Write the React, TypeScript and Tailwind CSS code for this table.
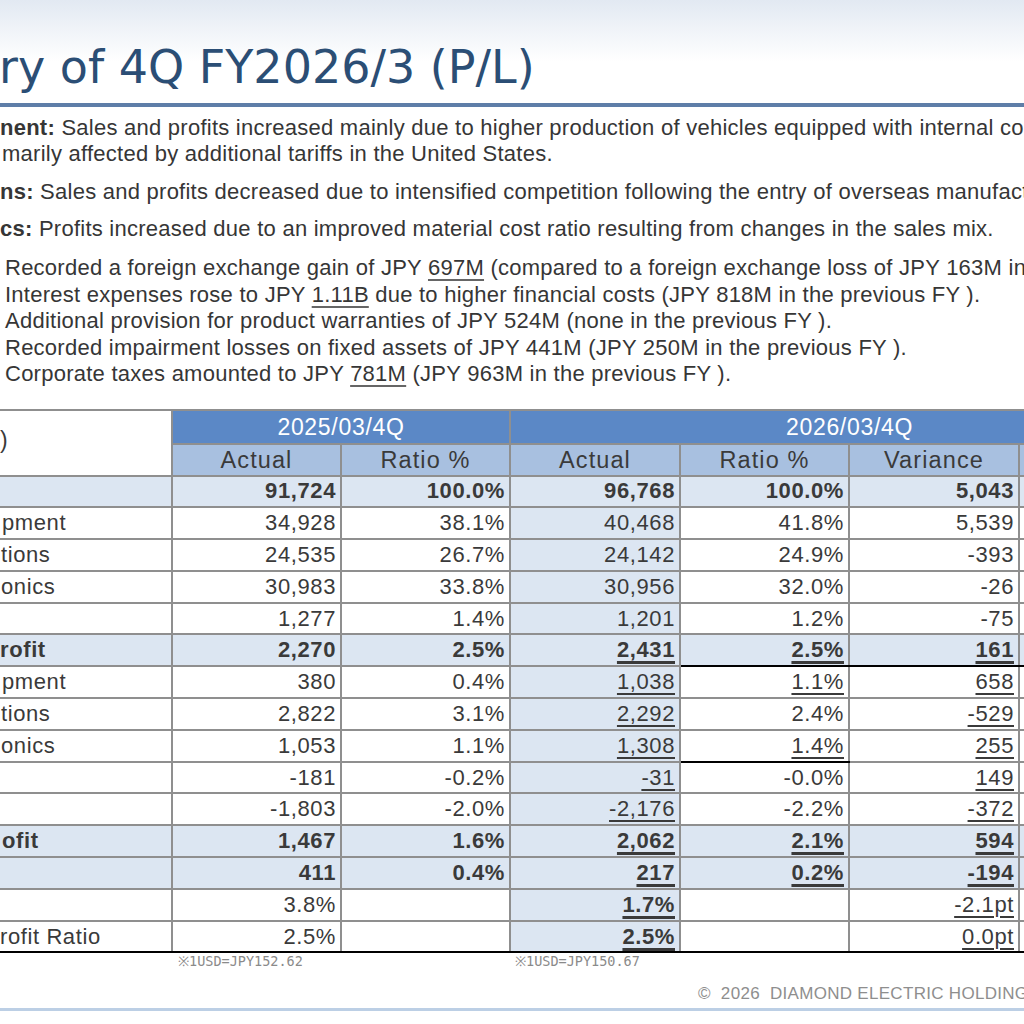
import React from 'react';

type Row = {
  label: string;
  indent: string;
  shade?: boolean;
  bold?: boolean;
  cells: string[];
  blackUnder?: number[];
};

// "_" = underlined, "*" = bold
const rows: Row[] = [
  { label: '', indent: 'pl-0', shade: true, bold: true, cells: ['91,724', '100.0%', '96,768', '100.0%', '5,043'] },
  { label: 'pment', indent: 'pl-[2px]', cells: ['34,928', '38.1%', '40,468', '41.8%', '5,539'] },
  { label: 'tions', indent: 'pl-[1px]', cells: ['24,535', '26.7%', '24,142', '24.9%', '-393'] },
  { label: 'onics', indent: 'pl-[1px]', cells: ['30,983', '33.8%', '30,956', '32.0%', '-26'] },
  { label: '', indent: 'pl-0', cells: ['1,277', '1.4%', '1,201', '1.2%', '-75'] },
  { label: 'rofit', indent: 'pl-0', shade: true, bold: true, cells: ['2,270', '2.5%', '_2,431', '_2.5%', '_161'], blackUnder: [4, 5, 6] },
  { label: 'pment', indent: 'pl-[2px]', cells: ['380', '0.4%', '_1,038', '_1.1%', '_658'] },
  { label: 'tions', indent: 'pl-[1px]', cells: ['2,822', '3.1%', '_2,292', '2.4%', '_-529'] },
  { label: 'onics', indent: 'pl-[1px]', cells: ['1,053', '1.1%', '_1,308', '_1.4%', '_255'], blackUnder: [4] },
  { label: '', indent: 'pl-0', cells: ['-181', '-0.2%', '_-31', '-0.0%', '_149'] },
  { label: '', indent: 'pl-0', cells: ['-1,803', '-2.0%', '_-2,176', '-2.2%', '_-372'] },
  { label: 'ofit', indent: 'pl-[2px]', shade: true, bold: true, cells: ['1,467', '1.6%', '_2,062', '_2.1%', '_594'] },
  { label: '', indent: 'pl-0', shade: true, bold: true, cells: ['411', '0.4%', '_217', '_0.2%', '_-194'] },
  { label: '', indent: 'pl-0', cells: ['3.8%', '', '*_1.7%', '', '_-2.1pt'] },
  { label: 'rofit Ratio', indent: 'pl-0', cells: ['2.5%', '', '*_2.5%', '', '_0.0pt'] },
];

const Value = ({ raw, bold }: { raw: string; bold?: boolean }) => {
  let text = raw;
  let strong = bold;
  let under = false;
  if (text.startsWith('*')) {
    strong = true;
    text = text.slice(1);
  }
  if (text.startsWith('_')) {
    under = true;
    text = text.slice(1);
  }
  return (
    <span
      className={
        (strong ? 'font-bold ' : '') +
        (under
          ? strong
            ? 'underline underline-offset-[4px] decoration-[2.5px]'
            : 'underline underline-offset-[4px] decoration-[1.5px]'
          : '')
      }
    >
      {text}
    </span>
  );
};

const Bullet = ({ children }: { children: React.ReactNode }) => (
  <div className="whitespace-nowrap leading-[26.5px]">{children}</div>
);

const U = ({ children }: { children: React.ReactNode }) => (
  <span className="underline underline-offset-[4px] decoration-[1.5px] decoration-[#666]">{children}</span>
);

export default function App() {
  return (
    <div className="w-[1024px] h-[1024px] overflow-hidden bg-white font-['Liberation_Sans',Arial,sans-serif] text-[#363636]">
      {/* Title */}
      <div className="h-[103px] pt-[39px] bg-linear-to-b from-[#e2e9f2] via-white via-[60%] to-white">
        <div className="font-['DejaVu_Sans',sans-serif] text-[46px] leading-[56px] text-[#2b4e75] whitespace-nowrap -ml-[1px]">
          ry of 4Q FY2026/3 (P/L)
        </div>
      </div>
      <div className="h-[4px] bg-[#5e7ea8]" />

      {/* Segment comments */}
      <div className="mt-[8px] text-[22px] tracking-[0.25px]">
        <div className="whitespace-nowrap leading-[26px]">
          <span className="font-bold">nent:</span> Sales and profits increased mainly due to higher production of vehicles equipped with internal combustion engines,
        </div>
        <div className="whitespace-nowrap leading-[26px] pl-[2px]">
          marily affected by additional tariffs in the United States.
        </div>
        <div className="whitespace-nowrap leading-[26px] mt-[12px]">
          <span className="font-bold">ns:</span> Sales and profits decreased due to intensified competition following the entry of overseas manufacturers.
        </div>
        <div className="whitespace-nowrap leading-[26px] mt-[11px]">
          <span className="font-bold">cs:</span> Profits increased due to an improved material cost ratio resulting from changes in the sales mix.
        </div>

        <div className="mt-[13px] pl-[5px]">
          <Bullet>
            Recorded a foreign exchange gain of JPY <U>697M</U> (compared to a foreign exchange loss of JPY 163M in the previous FY ).
          </Bullet>
          <Bullet>
            Interest expenses rose to JPY <U>1.11B</U> due to higher financial costs (JPY 818M in the previous FY ).
          </Bullet>
          <Bullet>Additional provision for product warranties of JPY 524M (none in the previous FY ).</Bullet>
          <Bullet>Recorded impairment losses on fixed assets of JPY 441M (JPY 250M in the previous FY ).</Bullet>
          <Bullet>
            Corporate taxes amounted to JPY <U>781M</U> (JPY 963M in the previous FY ).
          </Bullet>
        </div>
      </div>

      {/* P/L table */}
      <div className="mt-[21px]">
        <table className="table-fixed border-collapse w-[1189px] text-[22px] tracking-[0.6px] text-[#3a3a3a]">
          <colgroup>
            <col className="w-[172px]" />
            <col className="w-[169px]" />
            <col className="w-[169px]" />
            <col className="w-[170px]" />
            <col className="w-[169px]" />
            <col className="w-[170px]" />
            <col className="w-[170px]" />
          </colgroup>
          <thead>
            <tr className="h-[34px] text-[23px] tracking-[0.7px]">
              <td rowSpan={2} className="border-2 border-l-0 border-[#8f8f8f] bg-white align-middle text-left pl-0 pb-[4px]">
                )
              </td>
              <td colSpan={2} className="border-2 border-[#8f8f8f] bg-[#5b88c6] text-white text-center leading-[28px]">
                2025/03/4Q
              </td>
              <td colSpan={4} className="border-2 border-[#8f8f8f] bg-[#5b88c6] text-white text-center leading-[28px]">
                2026/03/4Q
              </td>
            </tr>
            <tr className="h-[32px] text-[23.5px] tracking-[1.1px]">
              <td className="border-2 border-[#8f8f8f] bg-[#a8c0e0] text-center leading-[28px]">Actual</td>
              <td className="border-2 border-[#8f8f8f] bg-[#a8c0e0] text-center leading-[28px]">Ratio %</td>
              <td className="border-2 border-[#8f8f8f] bg-[#a8c0e0] text-center leading-[28px]">Actual</td>
              <td className="border-2 border-[#8f8f8f] bg-[#a8c0e0] text-center leading-[28px]">Ratio %</td>
              <td className="border-2 border-[#8f8f8f] bg-[#a8c0e0] text-center leading-[28px]">Variance</td>
              <td className="border-2 border-[#8f8f8f] bg-[#a8c0e0] text-center leading-[28px]">Ratio %</td>
            </tr>
          </thead>
          <tbody>
            {rows.map((r, i) => {
              const last = i === rows.length - 1;
              return (
                <tr key={i} className="h-[31.8px]">
                  <td
                    className={
                      'border-2 border-l-0 border-[#8f8f8f] whitespace-nowrap overflow-hidden leading-[26px] ' +
                      r.indent +
                      (r.shade ? ' bg-[#dce6f2]' : ' bg-white') +
                      (r.bold ? ' font-bold' : '') +
                      (last ? ' border-b-black' : '')
                    }
                  >
                    {r.label}
                  </td>
                  {[...r.cells, ''].map((c, j) => {
                    const col = j + 1;
                    const tinted = r.shade || col === 3;
                    const black = last || (r.blackUnder ?? []).includes(col);
                    return (
                      <td
                        key={j}
                        className={
                          'border-2 border-[#8f8f8f] text-right pr-[4px] whitespace-nowrap leading-[26px]' +
                          (tinted ? ' bg-[#dce6f2]' : ' bg-white') +
                          (black ? ' border-b-black' : '')
                        }
                      >
                        {c ? <Value raw={c} bold={r.bold} /> : null}
                      </td>
                    );
                  })}
                </tr>
              );
            })}
          </tbody>
        </table>

        {/* Exchange rate notes */}
        <div className="flex font-['DejaVu_Sans_Mono',monospace] text-[13.5px] leading-[16px] text-[#8a8a8a] whitespace-nowrap">
          <div className="w-[172px] shrink-0" />
          <div className="w-[338px] shrink-0 pl-[6px]">※1USD=JPY152.62</div>
          <div className="pl-[5px]">※1USD=JPY150.67</div>
        </div>
      </div>

      {/* Footer */}
      <div className="mt-[16px] pl-[698px] whitespace-pre text-[17px] leading-[18px] tracking-[0.3px] text-[#8e8e8e]">
        {'©  2026  DIAMOND ELECTRIC HOLDINGS CO., LTD.'}
      </div>
      <div className="mt-[5px] h-[3px] bg-[#bccfe5]" />
    </div>
  );
}
